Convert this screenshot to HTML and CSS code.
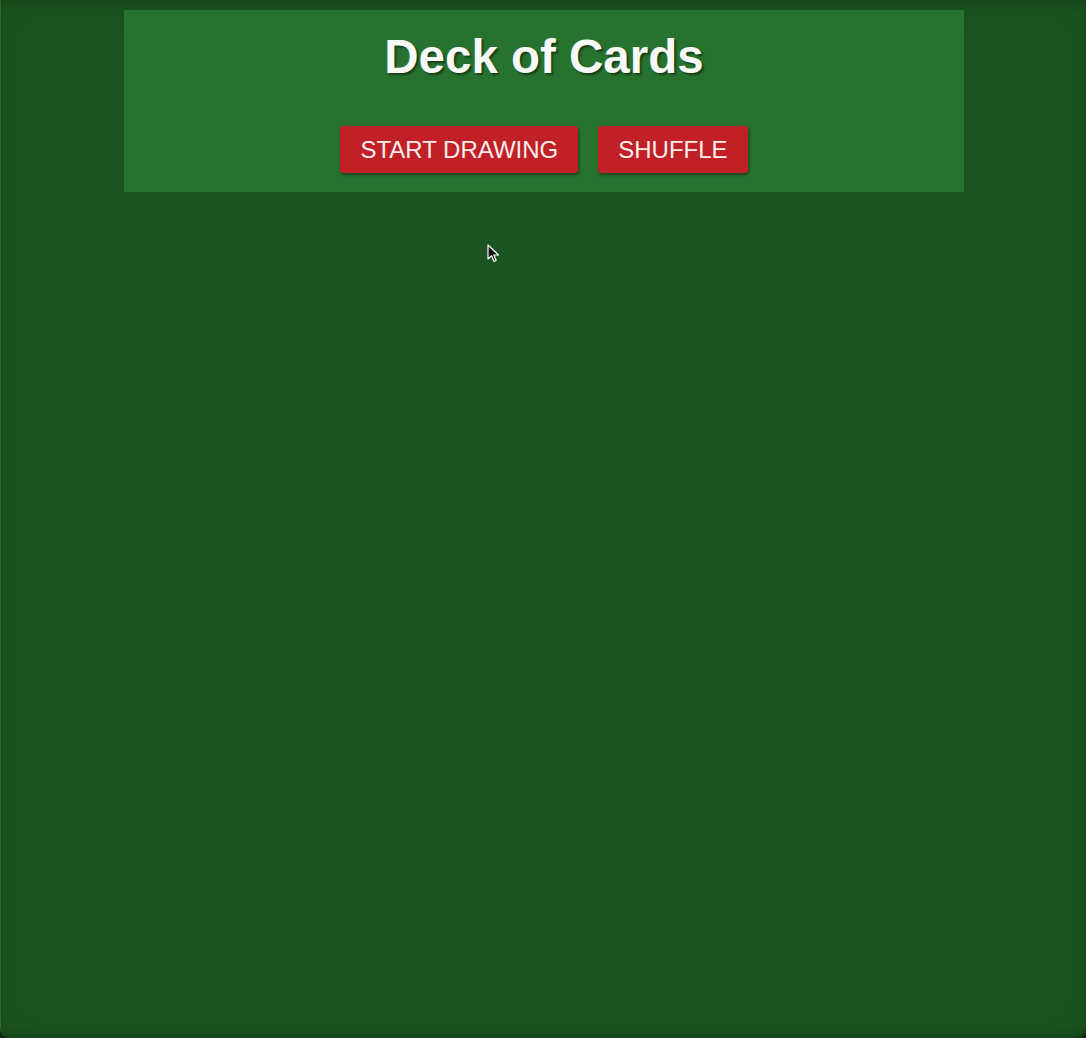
FILE: index.html
```html
<!DOCTYPE html>
<html lang="en">
<head>
<meta charset="utf-8">
<title>Deck of Cards</title>
<link rel="stylesheet" href="styles.css">
</head>
<body>
<div class="window">
  <header class="panel">
    <h1 class="title">Deck of Cards</h1>
    <div class="actions">
      <button class="btn">START DRAWING</button>
      <button class="btn">SHUFFLE</button>
    </div>
  </header>
  <svg class="cursor" width="14" height="20" viewBox="0 0 14 20" aria-hidden="true">
    <path d="M1 1 L1 15 L4.5 11.8 L7 17.5 L9.2 16.5 L6.8 11 L11.5 11 Z" fill="#111" stroke="#fff" stroke-width="1.2" stroke-linejoin="round"/>
  </svg>
</div>
</body>
</html>
```

FILE: styles.css
```css
html, body {
  margin: 0;
  padding: 0;
  background: #0f2a12;
}

body {
  font-family: "Liberation Sans", Arial, sans-serif;
}

.window {
  position: relative;
  box-sizing: border-box;
  height: 1038px;
  padding-top: 10px;
  border-left: 1px solid #2c6a30;
  border-radius: 0 0 10px 10px;
  background: #1b5420;
  box-shadow: inset 0 0 40px rgba(0, 0, 0, 0.07), inset 0 10px 12px -8px rgba(0, 0, 0, 0.15), inset 0 -8px 10px -6px rgba(0, 0, 0, 0.2);
  overflow: hidden;
  display: flex;
  flex-direction: column;
  align-items: center;
}

.panel {
  box-sizing: border-box;
  width: 840px;
  height: 182px;
  margin-left: 1px;
  padding-top: 21px;
  background: #28722f;
  text-align: center;
}

.title {
  margin: 0;
  font-size: 47.5px;
  font-weight: bold;
  line-height: 52px;
  color: #f7f9f4;
  text-shadow: 2px 2px 2px rgba(0, 0, 0, 0.45);
}

.actions {
  display: flex;
  justify-content: center;
  gap: 20px;
  margin-top: 43px;
}

.btn {
  box-sizing: border-box;
  height: 47px;
  padding: 0 20px;
  border: none;
  border-radius: 3px;
  background: #c12126;
  color: #fbeeee;
  font-family: "Liberation Sans", Arial, sans-serif;
  font-size: 24px;
  line-height: 47px;
  box-shadow: 1px 2px 3px rgba(0, 0, 0, 0.4);
  cursor: pointer;
}

.cursor {
  position: absolute;
  left: 486px;
  top: 244px;
}
```
